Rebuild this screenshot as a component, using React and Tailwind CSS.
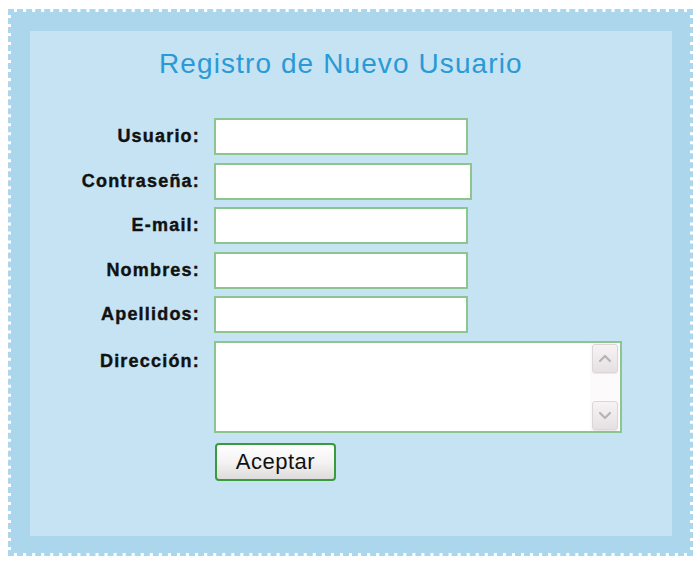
const fields = [
  { label: 'Usuario:', width: 'w-[254px]' },
  { label: 'Contraseña:', width: 'w-[258px]' },
  { label: 'E-mail:', width: 'w-[254px]' },
  { label: 'Nombres:', width: 'w-[254px]' },
  { label: 'Apellidos:', width: 'w-[254px]' },
];

function ScrollButton({ down }) {
  return (
    <div className="flex h-[29px] w-[26px] items-center justify-center rounded-[3px] border border-[#dcd6d8] bg-gradient-to-b from-[#f7f3f4] to-[#e6e0e2] shadow-[0_1px_1px_rgba(0,0,0,0.08)]">
      <svg width="14" height="9" viewBox="0 0 14 9" fill="none">
        <path
          d={down ? 'M2 2 L7 7 L12 2' : 'M2 7 L7 2 L12 7'}
          stroke="#b9b2b5"
          strokeWidth="2.2"
          strokeLinecap="round"
          strokeLinejoin="round"
        />
      </svg>
    </div>
  );
}

export default function App() {
  return (
    <div className="min-h-[563px] bg-white pl-[8px] pt-[9px]" style={{ fontFamily: '"Liberation Sans", Arial, sans-serif' }}>
      <div className="h-[547px] w-[685px] border-[3px] border-dashed border-[#acd6ec] bg-[#acd6ec] bg-clip-padding p-[19px]">
        <div className="h-[505px] w-[642px] bg-[#c5e3f2] pt-[16px]">
          <h1 className="ml-[129px] text-[28px] leading-[34px] tracking-[1.1px] text-[#2a9ad6]">Registro de Nuevo Usuario</h1>

          <div className="mt-[37px] flex flex-col gap-[7.6px]">
            {fields.map((field) => (
              <div key={field.label} className="flex items-center">
                <label className="w-[170px] text-right text-[18px] font-bold tracking-[1.2px] text-[#111] [-webkit-text-stroke:0.4px_#111]">{field.label}</label>
                <input
                  type="text"
                  className={`ml-[14px] h-[37px] ${field.width} border-2 border-[#8cc68e] bg-white outline-none`}
                />
              </div>
            ))}

            <div className="flex items-start">
              <label className="w-[170px] pt-[7px] text-right text-[18px] font-bold tracking-[1.2px] text-[#111] [-webkit-text-stroke:0.4px_#111]">Dirección:</label>
              <div className="ml-[14px] flex h-[92px] w-[408px] border-2 border-[#8cc68e] bg-white">
                <textarea className="h-full flex-1 resize-none border-0 bg-white outline-none" />
                <div className="flex w-[30px] flex-col justify-between bg-[#fdfafb] py-[1px] pl-[2px]">
                  <ScrollButton />
                  <ScrollButton down />
                </div>
              </div>
            </div>

            <div className="flex">
              <div className="w-[170px]" />
              <button className="ml-[15px] mt-[2px] h-[38px] w-[121px] rounded-[4px] border-2 border-[#3a9a3e] bg-gradient-to-b from-[#ffffff] via-[#f4f2f2] to-[#dedbdb] text-[22px] tracking-[0.5px] text-[#111]">
                Aceptar
              </button>
            </div>
          </div>
        </div>
      </div>
    </div>
  );
}
